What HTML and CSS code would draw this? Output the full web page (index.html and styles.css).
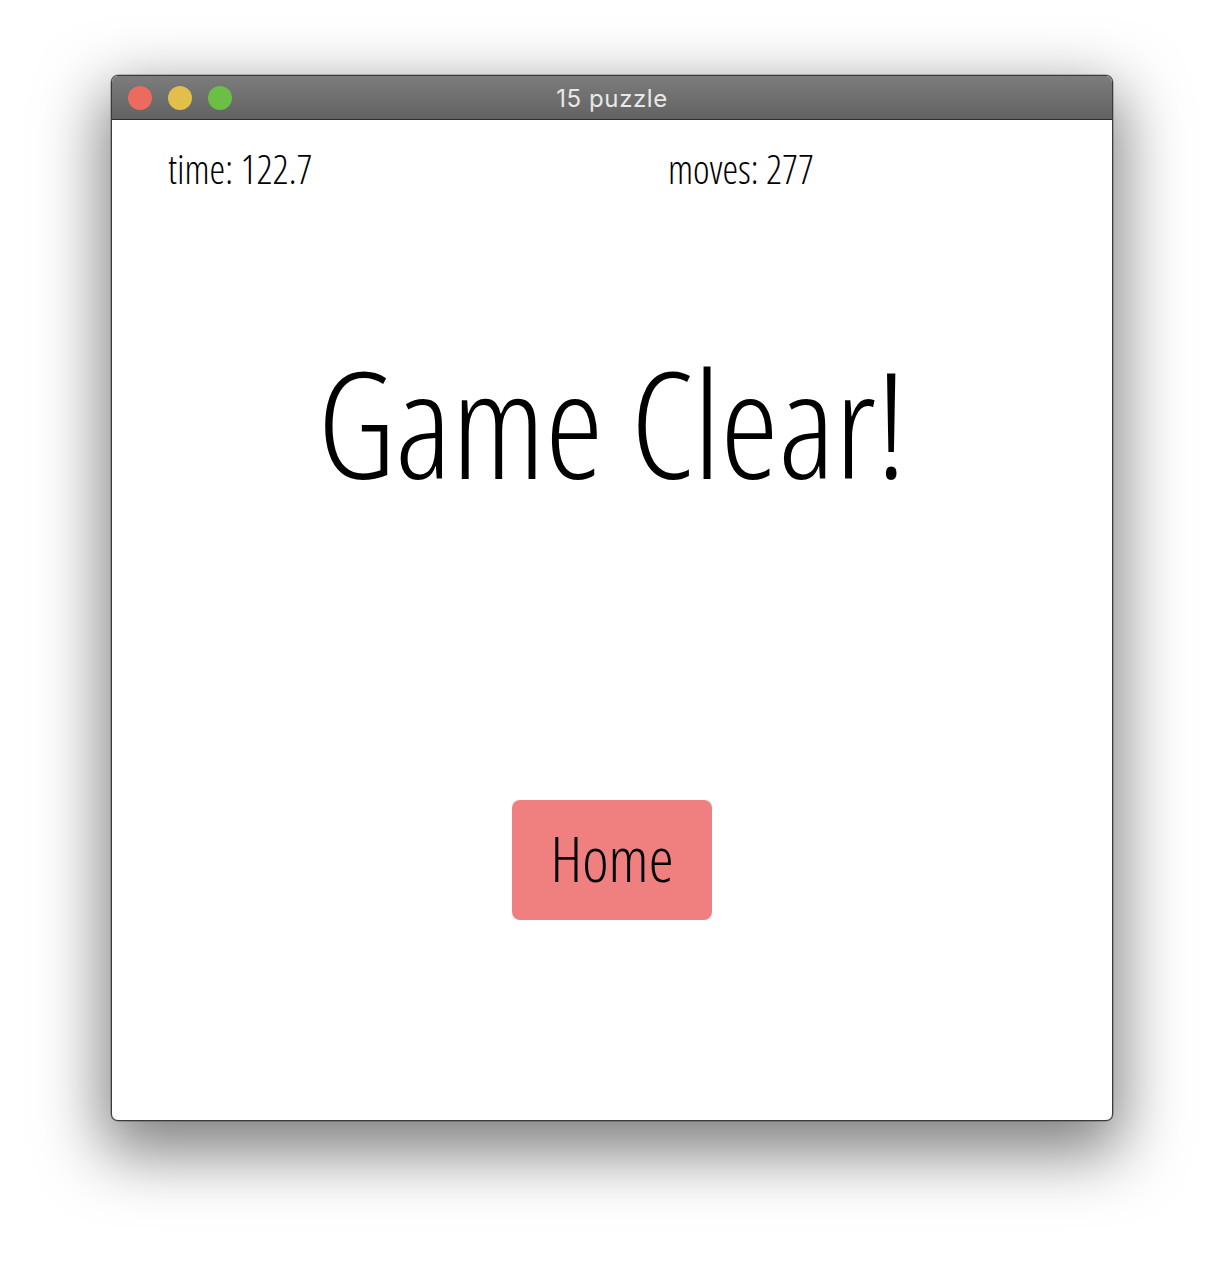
FILE: index.html
```html
<!DOCTYPE html>
<html>
<head>
<meta charset="utf-8">
<title>15 puzzle</title>
<link rel="stylesheet" href="styles.css">
</head>
<body>
<div class="window">
  <div class="titlebar">
    <div class="lights">
      <span class="light red"></span>
      <span class="light yellow"></span>
      <span class="light green"></span>
    </div>
    <div class="title">15 puzzle</div>
  </div>
  <div class="content">
    <div class="stats">
      <div class="stat">time: 122.7</div>
      <div class="stat">moves: 277</div>
    </div>
    <div class="headline">Game Clear!</div>
    <div class="actions">
      <div class="button">Home</div>
    </div>
  </div>
</div>
</body>
</html>
```

FILE: styles.css
```css
html, body {
  margin: 0;
  padding: 0;
  background: #ffffff;
}
body {
  padding: 75px 0 0 111px;
  height: 1268px;
  box-sizing: border-box;
  overflow: hidden;
}
.window {
  width: 1002px;
  box-sizing: border-box;
  border: 1px solid #3a3a3a;
  border-radius: 7px;
  overflow: hidden;
  background: #ffffff;
  box-shadow: 0 24px 64px 8px rgba(0, 0, 0, 0.5), 0 0 0 0.5px rgba(0,0,0,0.4);
}
.titlebar {
  height: 43px;
  position: relative;
  display: flex;
  align-items: center;
  justify-content: center;
  background: linear-gradient(#7b7c7b, #616261);
  border-bottom: 1px solid #2e2e2e;
}
.lights {
  position: absolute;
  left: 16px;
  top: 10px;
  display: flex;
  gap: 16px;
}
.light {
  width: 24px;
  height: 24px;
  border-radius: 50%;
}
.red { background: #ed6a5e; }
.yellow { background: #e2be4b; }
.green { background: #6cbe45; }
.title {
  font-family: Inter, "Liberation Sans", Arial, sans-serif;
  font-size: 24px;
  letter-spacing: 0.6px;
  color: #e8e8e8;
  padding-top: 2px;
}
.content {
  height: 1000px;
  display: flex;
  flex-direction: column;
  font-family: "Open Sans", sans-serif;
  font-weight: 300;
  font-stretch: 75%;
  color: #000;
}
.stats {
  display: grid;
  grid-template-columns: 500px 500px;
  padding-top: 20px;
}
.stat {
  padding-left: 56px;
  font-size: 39.5px;
  line-height: 58px;
}
.headline {
  margin-top: 129px;
  text-align: center;
  font-size: 147px;
  line-height: 190px;
}
.actions {
  margin-top: 283px;
  display: flex;
  justify-content: center;
}
.button {
  width: 200px;
  height: 120px;
  box-sizing: border-box;
  padding-bottom: 6px;
  border-radius: 8px;
  background: #f08080;
  display: flex;
  align-items: center;
  justify-content: center;
  font-size: 63px;
}
```
